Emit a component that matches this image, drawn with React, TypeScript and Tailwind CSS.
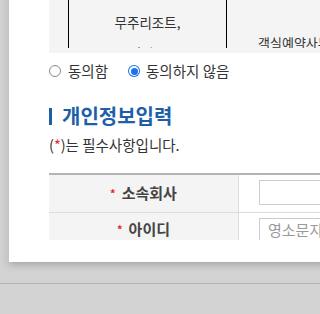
import React from "react";

export default function App() {
  const font = { fontFamily: '"Noto Sans CJK KR", "Noto Sans", sans-serif' };
  return (
    <div
      className="w-[320px] h-[314px] bg-[#d3d3d3] overflow-hidden relative"
      style={font}
    >
      <div className="absolute left-0 top-0 w-[9px] h-[262px] bg-gradient-to-r from-[#d3d3d3] to-[#c4c4c4]" />
      <div className="ml-[9px] w-[340px] h-[262px] bg-white shadow-[0_2px_8px_rgba(0,0,0,0.25)] pl-[40px] flex flex-col overflow-hidden">
        {/* top table remnant */}
        <div className="h-[53px] bg-[#f4f4f4] shrink-0">
          <div className="flex h-[48px]">
            <div className="w-[20px] shrink-0 border-r border-black" />
            <div className="w-[158px] shrink-0 border-r border-black overflow-hidden text-[13.5px] text-[#333] text-center leading-[31px] pt-[7px]">
              <div>무주리조트,</div>
              <div>용평리조트</div>
            </div>
            <div className="flex-1 min-w-0 overflow-hidden whitespace-nowrap text-[13px] text-[#333] pl-[31px] pt-[33px] leading-[20px]">
              객실예약사무소
            </div>
          </div>
        </div>
        {/* radios */}
        <div className="flex items-center h-[36px] text-[14.5px] text-[#333]">
          <span className="w-[12px] h-[12px] rounded-full border border-[#888] bg-white shrink-0" />
          <span className="ml-[7px]">동의함</span>
          <span className="ml-[20px] w-[12px] h-[12px] rounded-full bg-[#1a73e8] flex items-center justify-center shrink-0">
            <span className="w-[10px] h-[10px] rounded-full bg-white flex items-center justify-center">
              <span className="w-[7px] h-[7px] rounded-full bg-[#1a73e8]" />
            </span>
          </span>
          <span className="ml-[6px]">동의하지 않음</span>
        </div>
        {/* heading */}
        <div className="flex items-center mt-[15px] h-[24px]">
          <span className="w-[3px] h-[17px] bg-[#1e5fa8]" />
          <span className="ml-[10px] text-[20px] font-bold text-[#1e5fa8] leading-[24px]">
            개인정보입력
          </span>
        </div>
        <div className="mt-[7px] text-[14.5px] text-[#333] leading-[20px]">
          (<span className="text-[#e8252b]">*</span>)는 필수사항입니다.
        </div>
        {/* form table */}
        <div className="mt-[18px] border-t-2 border-[#b4b4b4] h-[67px] overflow-hidden shrink-0">
          <div className="flex h-[38px] border-b border-[#dcdcdc]">
            <div className="w-[190px] shrink-0 bg-[#f4f4f4] border-r border-[#dcdcdc] flex items-center justify-center text-[15px] font-bold text-[#444]">
              <span className="text-[#e8252b] text-[11px] mr-[6px]">*</span>
              소속회사
            </div>
            <div className="flex-1 min-w-0 pl-[20px] pt-[5px]">
              <div className="h-[25px] border border-[#ccc] bg-white" />
            </div>
          </div>
          <div className="flex h-[40px]">
            <div className="w-[190px] shrink-0 bg-[#f4f4f4] border-r border-[#dcdcdc] flex justify-center text-[15px] font-bold text-[#444] pt-[5px] leading-[22px]">
              <span className="text-[#e8252b] text-[11px] mr-[6px]">*</span>
              아이디
            </div>
            <div className="flex-1 min-w-0 pl-[20px] pt-[5px]">
              <div className="h-[30px] border border-[#ccc] bg-white text-[15px] text-[#999] pl-[8px] leading-[22px] whitespace-nowrap overflow-hidden">
                영소문자, 숫자
              </div>
            </div>
          </div>
        </div>
      </div>
      <div className="absolute left-0 top-[283px] w-full h-[1px] bg-[#b2b2b2]" />
    </div>
  );
}
